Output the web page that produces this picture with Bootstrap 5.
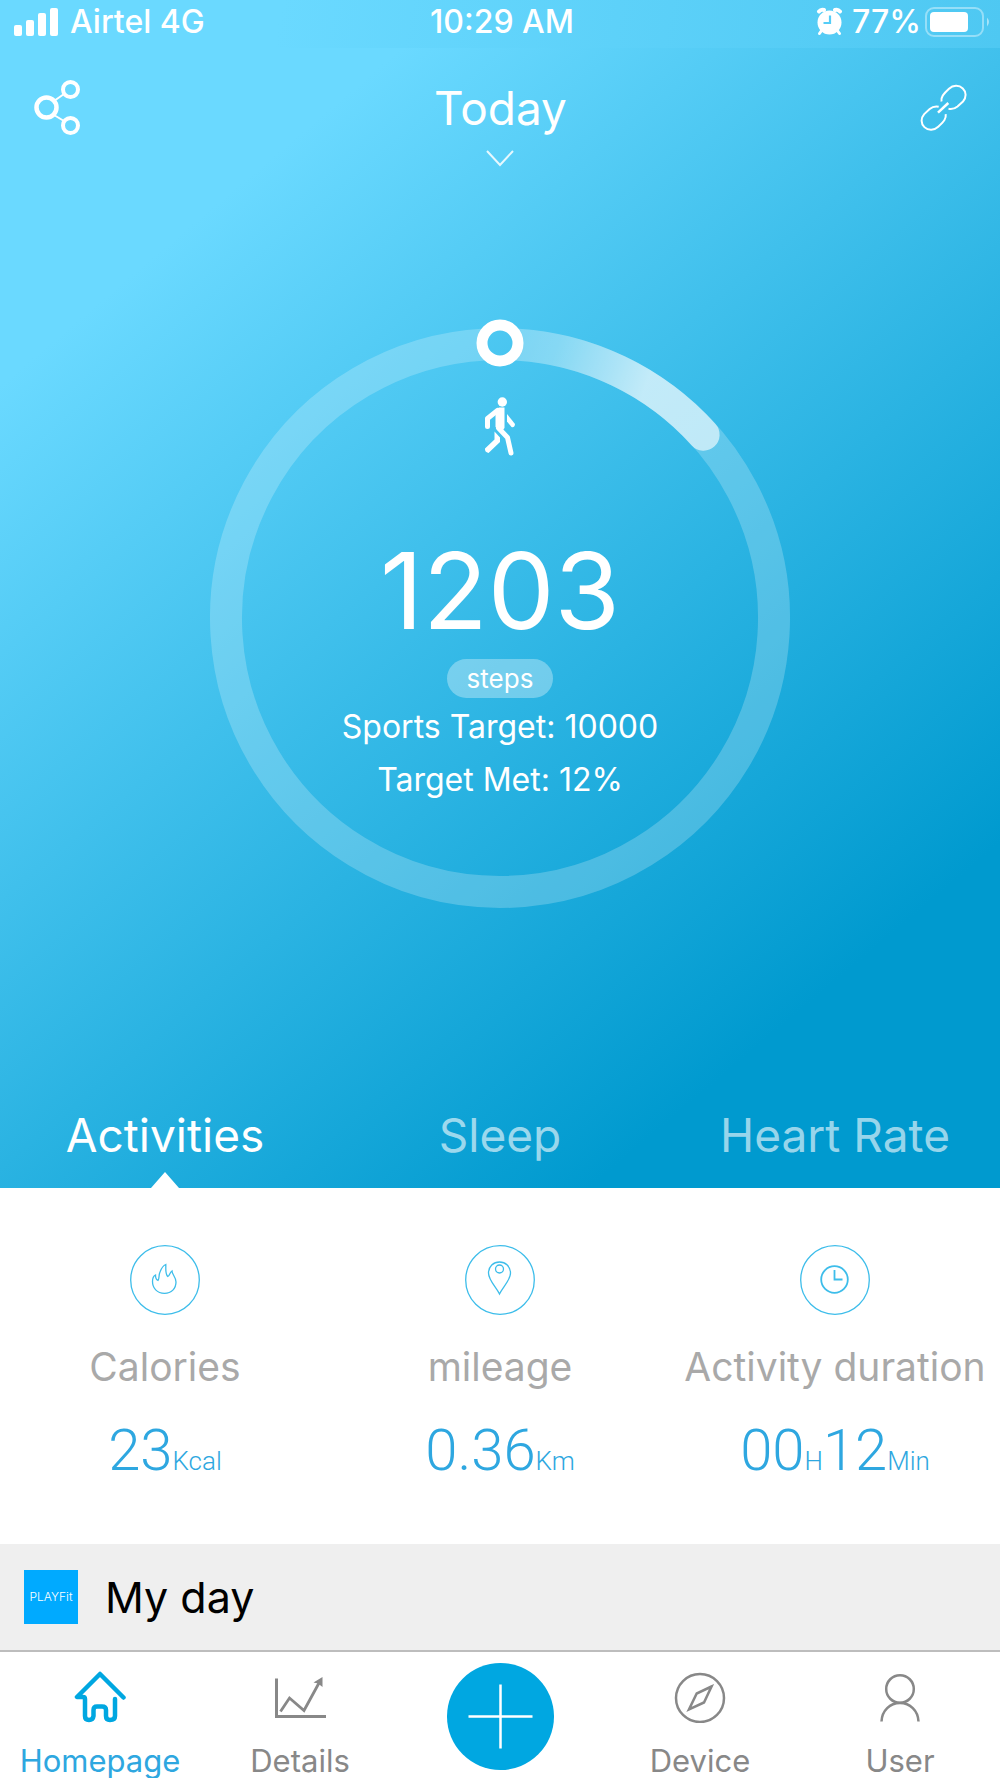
<!DOCTYPE html>
<html lang="en">
<head>
<meta charset="utf-8">
<meta name="viewport" content="width=device-width, initial-scale=1">
<title>Today</title>
<link href="https://cdn.jsdelivr.net/npm/bootstrap@5.3.0/dist/css/bootstrap.min.css" rel="stylesheet">
<style>
  body { font-family: Inter, "Liberation Sans", sans-serif; background: #fff; color: #000; }
  svg { display: block; flex: none; }
  .hero { background: linear-gradient(140deg, #6ad9ff 19%, #009acf 83%); color: #fff; }
  .status-bar { height: 48px; padding: 0 10px 5px 14px; font-size: 32px; line-height: 43px;
    background: linear-gradient(100deg, #6ad9ff 28%, #4ec8f2 100%); }
  .status-side { flex: 1 1 0; }
  .top-bar { padding: 32px 33px 0 34px; }
  .top-title { font-size: 46px; line-height: 56px; font-weight: 400; }
  .plain-btn { background: none; border: 0; padding: 0; color: inherit; }
  .chevron { margin-top: 14px; }
  .dial { width: 580px; max-width: 100%; height: 580px; margin: 161px auto 199px; padding-top: 68px; }
  .dial-ring { top: 0; left: 0; overflow: visible; }
  .dial-content { position: relative; }
  .step-count { font-size: 106px; line-height: 106px; margin-top: 80px; }
  .step-pill { font-size: 26px; line-height: 39px; padding: 0 20px; margin-top: 15px; margin-bottom: 2px;
    background: rgba(255,255,255,.33); }
  .target-line { font-size: 32px; line-height: 53px; }
  .thirds { display: grid; grid-template-columns: repeat(3, minmax(0, 1fr)); column-gap: 5px; }
  .hero-tab { font-size: 46px; line-height: 56px; padding: 0 0 9px; color: rgba(255,255,255,.6); text-decoration: none; }
  .hero-tab.active { color: #fff; }
  .tab-pointer { width: 28px; height: 16px; margin-top: 9px; }
  .metrics { padding: 57px 0 64px; }
  .metric-icon { stroke: #3dbdea; fill: none; }
  .metric-label { font-size: 39px; line-height: 48px; margin-top: 28px; color: #a9a9a9; white-space: nowrap; }
  .metric-value { font-family: Roboto, "Liberation Sans", sans-serif; font-weight: 300; font-size: 58px; line-height: 60px;
    margin-top: 29px; color: #2ea7e0; white-space: nowrap; }
  .metric-unit { font-size: 26px; line-height: 26px; }
  .day-bar { height: 106px; padding: 0 24px; gap: 27px; background: #efefef; }
  .day-logo { width: 54px; height: 54px; background: #00aaff; color: #fff; font-size: 12px; font-weight: 300; }
  .day-title { font-size: 43px; line-height: 54px; font-weight: 400; }
  .bottom-nav { border-top: 2px solid #bdbdbd; background: #fff; overflow: hidden; }
  .bottom-link { flex: 1 1 0; padding-top: 19px; padding-bottom: 2px; gap: 22px; font-size: 31px; line-height: 31px;
    color: #888; text-decoration: none; }
  .bottom-link.active { color: #2ea7e0; }
  .bottom-link svg { stroke: #888; fill: none; }
  .bottom-link.active svg { stroke: #00a7e1; }
  .add-cell { flex: 1 1 0; padding-top: 11px; }
</style>
<script src="https://cdn.jsdelivr.net/npm/bootstrap@5.3.0/dist/js/bootstrap.bundle.min.js" defer></script>
</head>
<body>
<section class="hero">
  <div class="status-bar d-flex align-items-center fw-medium">
    <div class="status-side d-flex align-items-center">
      <svg width="44" height="28" fill="#fff" aria-hidden="true"><rect y="17" width="8" height="11" rx="2"/><rect x="12" y="12" width="8" height="16" rx="2"/><rect x="24" y="5" width="8" height="23" rx="2"/><rect x="36" width="8" height="28" rx="2"/></svg>
      <span class="ms-2 ps-1">Airtel 4G</span>
    </div>
    <span>10:29 AM</span>
    <div class="status-side d-flex align-items-center justify-content-end">
      <svg width="28" height="29" aria-hidden="true"><g stroke="#fff" stroke-linecap="round" fill="none"><path d="M3 4.500 Q5 2 8 3M19 3 Q22 2 24 4.500" stroke-width="4"/><path d="M6 23 3.500 26.500M21 23 23.500 26.500" stroke-width="3"/></g><circle cx="13.500" cy="15.500" r="12" fill="#fff"/><path d="M14 8.500V16H7.500" fill="none" stroke="#55cdf7" stroke-width="2.200"/></svg>
      <span class="ms-2">77%</span>
      <svg class="ms-1" width="65" height="30" aria-hidden="true"><rect x="1" y="1" width="57" height="28" rx="8" fill="none" stroke="#fff" stroke-opacity=".4" stroke-width="2"/><rect x="5" y="5" width="38" height="20" rx="4" fill="#fff"/><path d="M62 10.500Q66 15 62 19.500Z" fill="#fff" fill-opacity=".5"/></svg>
    </div>
  </div>

  <header class="top-bar d-flex justify-content-between align-items-start">
    <button class="plain-btn" type="button" aria-label="Share">
      <svg width="48" height="56" fill="none" stroke="#fff"><path d="M20 21 30 14M20 35 30 41" stroke-width="2"/><circle cx="12.500" cy="27.500" r="10" stroke-width="4.500"/><circle cx="36.500" cy="9.500" r="7.500" stroke-width="4"/><circle cx="36.500" cy="45.500" r="7.500" stroke-width="4"/></svg>
    </button>
    <button class="plain-btn d-flex flex-column align-items-center" type="button">
      <span class="top-title">Today</span>
      <svg class="chevron" width="28" height="17" fill="none" stroke="#fff" stroke-opacity=".85" stroke-width="2"><path d="M1 1 14 15 27 1"/></svg>
    </button>
    <button class="plain-btn pt-1" type="button" aria-label="Link device">
      <svg width="48" height="48" fill="none" stroke="#fff" stroke-width="2"><g transform="translate(1 0)"><path id="loop" d="M21.500 17.500C20.800 13 23 10.500 29 4.800 33 1 39 .8 42.800 4.500 46.500 8 46.500 13.500 43 17.500L37.500 22.500C34 25.500 31 25.300 28.500 24.800"/><use href="#loop" transform="rotate(180 23.600 23.800)"/><path d="M18 28.700 28.300 19" stroke-width="2.500"/></g></svg>
    </button>
  </header>

  <div class="dial position-relative">
    <svg class="dial-ring position-absolute" width="580" height="580" fill="none" aria-hidden="true">
      <defs><linearGradient id="arc" gradientUnits="userSpaceOnUse" x1="305" y1="15" x2="435" y2="60"><stop offset="0" stop-color="#fff" stop-opacity=".08"/><stop offset=".3" stop-color="#fff" stop-opacity=".16"/><stop offset="1" stop-color="#fff" stop-opacity=".6"/></linearGradient></defs>
      <path d="M275 16.400A274 274 0 1 0 305 16.400" stroke="#fff" stroke-opacity=".22" stroke-width="32"/>
      <path d="M305 .4A290 290 0 0 1 505.500 96A16 16 0 0 1 481.700 117.400A258 258 0 0 0 305 32.400Z" fill="url(#arc)"/>
      <circle cx="290" cy="15" r="18" stroke="#fff" stroke-width="11"/>
    </svg>
    <div class="dial-content d-flex flex-column align-items-center">
      <svg width="40" height="62" fill="none" stroke="#fff" stroke-width="5" stroke-linecap="round" stroke-linejoin="round" aria-hidden="true"><circle cx="22.300" cy="6" r="4.700" fill="#fff" stroke="none"/><path d="M15.500 14 19 11.500H24.500V32L22 35 15.500 31Z" fill="#fff" stroke="none"/><path d="M17.500 14.500 7.500 22.500V30.500M18.500 32 27.500 41.500 31 57"/><path d="M14.500 35.500 20 41.500V46L8.500 57Q4.500 56 5 52.500L14.500 43.500Z" fill="#fff" stroke="none"/><path d="M27 18 35 28Q34.500 32 31.500 31L27 25.500Z" fill="#fff" stroke="none"/></svg>
      <div class="step-count">1203</div>
      <div class="step-pill rounded-pill">steps</div>
      <div class="target-line">Sports Target: 10000</div>
      <div class="target-line">Target Met: 12%</div>
    </div>
  </div>

  <nav class="thirds" aria-label="Data views">
    <a class="hero-tab active d-flex flex-column align-items-center pb-0" href="#" aria-current="page">Activities
      <svg class="tab-pointer" viewBox="0 0 28 16"><path d="M0 16 14 0 28 16Z" fill="#fff"/></svg>
    </a>
    <a class="hero-tab text-center" href="#">Sleep</a>
    <a class="hero-tab text-center" href="#">Heart Rate</a>
  </nav>
</section>

<section class="metrics thirds">
  <div class="d-flex flex-column align-items-center">
    <svg class="metric-icon" width="70" height="70" stroke-width="1.300" aria-hidden="true"><circle cx="35" cy="35" r="34.300"/><path d="M34.500 48.300C27 48.300 22.500 43 22.500 36.500 22.500 33 23.500 31 25.500 30 25.500 33 26.500 35 28 35.500 29.500 34 28.500 30 30 27 31.500 23 33 20.500 35.800 19.500 36 24 35 29 37.800 31.500 40 30.500 39.500 27.500 42 26 42 29.500 46 32 46 37 46 43.500 41.500 48.300 34.500 48.300Z"/></svg>
    <div class="metric-label">Calories</div>
    <div class="metric-value">23<span class="metric-unit">Kcal</span></div>
  </div>
  <div class="d-flex flex-column align-items-center">
    <svg class="metric-icon" width="70" height="70" stroke-width="1.300" aria-hidden="true"><circle cx="35" cy="35" r="34.300"/><path d="M34.500 49C31 42 23.500 35 23.500 28 23.500 21.500 28.500 17 34.500 17S45.500 21.500 45.500 28C45.500 35 38 42 34.500 49Z"/><circle cx="34.500" cy="24" r="4"/></svg>
    <div class="metric-label">mileage</div>
    <div class="metric-value">0.36<span class="metric-unit">Km</span></div>
  </div>
  <div class="d-flex flex-column align-items-center">
    <svg class="metric-icon" width="70" height="70" stroke-width="1.300" aria-hidden="true"><circle cx="35" cy="35" r="34.300"/><circle cx="34.500" cy="34.500" r="13.300" stroke-width="1.800"/><path d="M34.500 25V34.500H42.500" stroke-width="1.800"/></svg>
    <div class="metric-label">Activity duration</div>
    <div class="metric-value">00<span class="metric-unit">H</span>12<span class="metric-unit">Min</span></div>
  </div>
</section>

<section class="day-bar d-flex align-items-center">
  <div class="day-logo d-flex align-items-center justify-content-center">PLAYFit</div>
  <h1 class="day-title m-0">My day</h1>
</section>

<nav class="bottom-nav d-flex sticky-bottom" aria-label="Main">
  <a class="bottom-link active d-flex flex-column align-items-center" href="#" aria-current="page">
    <svg width="52" height="52" stroke-width="4.500" stroke-linecap="round" stroke-linejoin="round"><path d="M49.500 26.500 26 3 3 26H9Q11 26 11 28V45Q11 49 15 49T19.500 45V39Q19.500 35.500 23 35.500H28Q32 35.500 32 39V45Q32 49 36 49 41 49 41 45V28"/></svg>
    <span>Homepage</span>
  </a>
  <a class="bottom-link d-flex flex-column align-items-center" href="#">
    <svg width="52" height="52"><path d="M2.500 7.500V45.500H52" stroke-width="3"/><path d="M6.500 40.500 15.500 27 30 39.500 45 12" stroke-width="2.800"/><path d="M48.500 6 39.500 11.500 44 12.500 48.500 16Z" fill="#888" stroke="none"/></svg>
    <span>Details</span>
  </a>
  <div class="add-cell d-flex justify-content-center align-items-start">
    <button class="plain-btn" type="button" aria-label="Add">
      <svg width="107" height="107"><circle cx="53.500" cy="53.500" r="53.500" fill="#00a7e1"/><path d="M53.500 21.500V85.500M21.500 53.500H85.500" stroke="#fff" stroke-width="2.500"/></svg>
    </button>
  </div>
  <a class="bottom-link d-flex flex-column align-items-center" href="#">
    <svg width="52" height="52" stroke-width="2.500"><circle cx="26" cy="27" r="24"/><path d="M37.500 15.500 22.700 22.500 15 38.500 30 31.500Z"/></svg>
    <span>Device</span>
  </a>
  <a class="bottom-link d-flex flex-column align-items-center" href="#">
    <svg width="52" height="52" stroke-width="2.500"><circle cx="26" cy="18" r="13.800"/><path d="M7.500 50.500C8 39.500 16 32 26 32S44 39.500 44.500 50.500"/></svg>
    <span>User</span>
  </a>
</nav>
</body>
</html>
